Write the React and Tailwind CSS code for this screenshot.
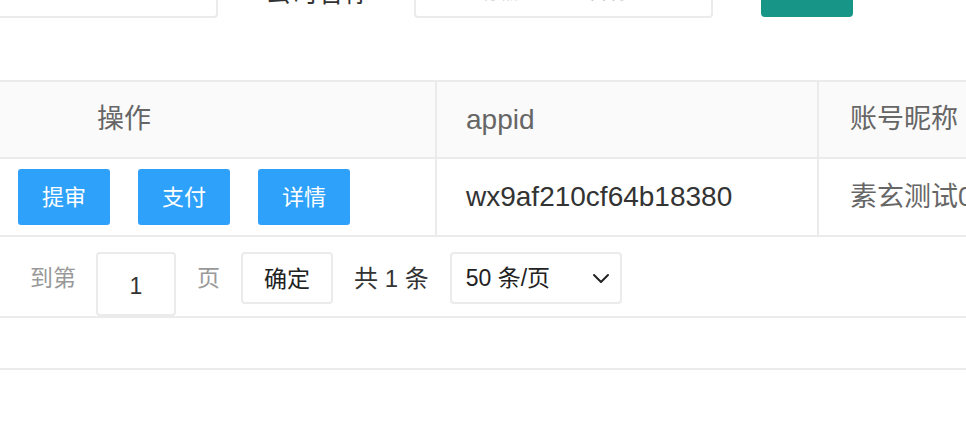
export default function App() {
  const font = { fontFamily: '"Liberation Sans", "Noto Sans CJK SC", sans-serif' };
  return (
    <div className="w-[966px] h-[422px] overflow-hidden bg-white relative" style={font}>
      {/* top search bar (cut off) */}
      <div className="flex items-center h-[50px] mt-[-32px]">
        <div className="w-[228px] h-[50px] ml-[-10px] border-2 border-[#ebebeb] rounded-[4px] flex items-center pl-[40px] pb-[8px] text-[22px] text-[#bbb]">
          请选择条件
        </div>
        <div className="ml-[47px] text-[26px] text-[#333] leading-none">公司名称</div>
        <div className="ml-[45px] w-[299px] h-[50px] border-2 border-[#ebebeb] rounded-[4px] flex items-center pl-[60px] pb-[6px] text-[22px] text-[#bbb]">
          请输入公司名称
        </div>
        <div className="ml-[48px] w-[92px] h-[49px] mt-[-1px] bg-[#179688] rounded-[4px] flex items-center justify-center pb-[10px] text-[22px] text-white">
          查询
        </div>
      </div>

      {/* table */}
      <div className="mt-[62px] border-t-2 border-[#ebebeb]">
        <div className="flex h-[77px] bg-[#fafafa] border-b-2 border-[#ebebeb] text-[27px] text-[#666]">
          <div className="w-[437px] border-r-2 border-[#ebebeb] flex items-center pl-[97px]">操作</div>
          <div className="w-[382px] border-r-2 border-[#ebebeb] flex items-center pl-[29px] text-[28px]">appid</div>
          <div className="flex-1 flex items-center pl-[31px] whitespace-nowrap">账号昵称</div>
        </div>
        <div className="flex h-[78px] border-b-2 border-[#ebebeb]">
          <div className="w-[437px] border-r-2 border-[#ebebeb] flex items-center pl-[18px] gap-[28px]">
            {['提审', '支付', '详情'].map((t) => (
              <div key={t} className="w-[92px] h-[56px] bg-[#2ea1fb] rounded-[3px] flex items-center justify-center text-white text-[22px]">
                {t}
              </div>
            ))}
          </div>
          <div className="w-[382px] border-r-2 border-[#ebebeb] flex items-center pl-[29px] text-[28px] text-[#333]">
            wx9af210cf64b18380
          </div>
          <div className="flex-1 flex items-center pl-[31px] text-[27px] text-[#666] whitespace-nowrap overflow-hidden">
            素玄测试01
          </div>
        </div>
      </div>

      {/* pagination */}
      <div className="h-[81px] border-b-2 border-[#ebebeb] flex items-start pt-[15px]">
        <div className="ml-[30px] mt-[15px] text-[23px] text-[#999] leading-none">到第</div>
        <div className="ml-[20px] w-[80px] h-[64px] border-2 border-[#ebebeb] rounded-[4px] flex items-center justify-center text-[23px] text-[#333] pt-[4px]">
          1
        </div>
        <div className="ml-[21px] mt-[15px] text-[23px] text-[#999] leading-none">页</div>
        <div className="ml-[21px] w-[92px] h-[52px] border-2 border-[#ebebeb] rounded-[4px] flex items-center justify-center text-[23px] text-[#222] pt-[2px]">
          确定
        </div>
        <div className="ml-[21px] mt-[15px] text-[24px] text-[#333] leading-none">共 1 条</div>
        <div className="ml-[21px] w-[172px] h-[52px] border-2 border-[#ebebeb] rounded-[4px] flex items-center pl-[14px] pr-[10px] text-[23px] text-[#222]">
          <span className="flex-1">50 条/页</span>
          <svg width="18" height="12" viewBox="0 0 18 12" fill="none">
            <path d="M2 3 L9 10 L16 3" stroke="#222" strokeWidth="2" strokeLinecap="round" strokeLinejoin="round" />
          </svg>
        </div>
      </div>
      <div className="h-[52px] border-b-2 border-[#ebebeb]"></div>
    </div>
  );
}
